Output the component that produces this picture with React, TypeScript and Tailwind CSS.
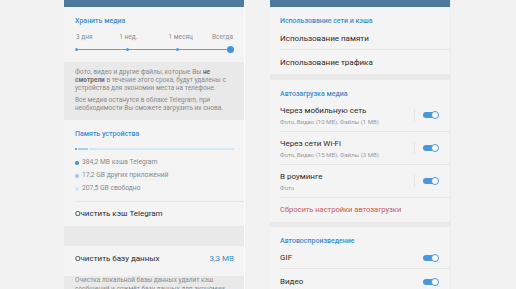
import React from "react";

const blue = "text-[#3b8dcb]";

const Title = ({ children }: { children: React.ReactNode }) => (
  <div className={`h-[18px] pt-[10px] text-[7px] leading-[8px] font-medium ${blue}`}>{children}</div>
);

const Toggle = () => (
  <div className="relative flex h-[8px] w-[16px] items-center">
    <div className="h-[6px] w-[14px] rounded-full bg-[#4a98dc]" />
    <div className="absolute right-0 top-0 h-[8px] w-[8px] rounded-full border-[1.5px] border-[#4a98dc] bg-white" />
  </div>
);

const AutoRow = ({ title, sub, h, pt }: { title: string; sub: string; h: string; pt: string }) => (
  <div className={`flex ${h} items-center border-b border-[#e6e6e6] pr-[11px]`}>
    <div className={`flex-1 self-start ${pt}`}>
      <div className="text-[8px] leading-[10px] text-[#2a2a2a]">{title}</div>
      <div className="mt-[2px] text-[6px] leading-[8px] text-[#9a9a9a]">{sub}</div>
    </div>
    <div className="mr-[8px] h-[12px] w-px bg-[#e2e2e2]" />
    <Toggle />
  </div>
);

const ticks = ["3 дня", "1 нед.", "1 месяц", "Всегда"];

const StoragePanel = () => (
  <div className="w-[181px] shrink-0 border-r border-[#fbfbfb] bg-[#f4f4f4]">
    <div className="h-[7px] bg-[#4f7aa0]" />
    <div className="pl-[11px] pr-[10px]">
      <Title>Хранить медиа</Title>
      <div className="h-[17px] pt-[9px]">
        <div className="mx-[1px] flex justify-between">
          {ticks.map((t, i) => (
            <div
              key={t}
              className={`flex w-0 ${i === 0 ? "justify-start" : i === 3 ? "justify-end" : "justify-center"}`}
            >
              <span className="whitespace-nowrap text-[6.5px] leading-[7px] text-[#8e8e8e]">{t}</span>
            </div>
          ))}
        </div>
      </div>
      <div className="h-[20px] pt-[3px]">
        <div className="relative flex h-[8px] items-center justify-between">
          <div className="absolute left-[1px] right-[3px] top-[3.5px] h-px bg-[#5aa6dc]" />
          <div className="relative h-[3px] w-[3px] rounded-full bg-[#4a9ade]" />
          <div className="relative h-[3px] w-[3px] rounded-full bg-[#4a9ade]" />
          <div className="relative h-[3px] w-[3px] rounded-full bg-[#4a9ade]" />
          <div className="relative h-[7px] w-[7px] rounded-full bg-[#3d95e0]" />
        </div>
      </div>
    </div>
    <div className="h-[58px] bg-[#e9e9e9] pl-[11px] pr-[4px] pt-[6px] text-[6.5px] leading-[8px] text-[#8a8a8a]">
      <p className="whitespace-nowrap">
        Фото, видео и другие файлы, которые Вы <b className="font-bold text-[#6f6f6f]">не</b>
        <br />
        <b className="font-bold text-[#6f6f6f]">смотрели</b> в течение этого срока, будут удалены с
        <br />
        устройства для экономии места на телефоне.
      </p>
      <p className="mt-[4px] whitespace-nowrap">
        Все медиа останутся в облаке Telegram, при
        <br />
        необходимости Вы сможете загрузить их снова.
      </p>
    </div>
    <div className="pl-[11px] pr-[10px]">
      <Title>Память устройства</Title>
      <div className="h-[18px] pt-[10px]">
        <div className="flex h-[2px] items-center gap-[1px]">
          <div className="h-[2px] w-[2px] rounded-full bg-[#3d8fd6]" />
          <div className="h-[2px] w-[10px] bg-[#a8cfee]" />
          <div className="h-[2px] flex-1 bg-[#d4e7f6]" />
        </div>
      </div>
      {[
        ["384,2 MB кэша Telegram", "bg-[#3d8fd6]"],
        ["17,2 GB других приложений", "bg-[#9ccaf0]"],
        ["207,5 GB свободно", "bg-[#d0e6f7]"],
      ].map(([t, c]) => (
        <div key={t} className="flex h-[13px] items-center gap-[3px]">
          <div className={`h-[4px] w-[4px] rounded-full ${c}`} />
          <span className="text-[6.7px] text-[#8a8a8a]">{t}</span>
        </div>
      ))}
    </div>
    <div className="ml-[11px] mt-[6px] flex h-[25px] items-center border-t border-[#e6e6e6] text-[8px] text-[#2a2a2a]">
      Очистить кэш Telegram
    </div>
    <div className="h-[20px] bg-[#e9e9e9]" />
    <div className="flex h-[30px] items-center justify-between pb-[4px] pl-[11px] pr-[10px] text-[8px]">
      <span className="text-[#2a2a2a]">Очистить базу данных</span>
      <span className={blue}>3,3 MB</span>
    </div>
    <div className="h-[20px] bg-[#e9e9e9] pl-[11px] text-[6.5px] leading-[9px] text-[#8a8a8a]">
      <p className="whitespace-nowrap">
        Очистка локальной базы данных удалит кэш
        <br />
        сообщений и сожмёт базу данных для экономии
      </p>
    </div>
  </div>
);

const NetworkPanel = () => (
  <div className="w-[181px] shrink-0 border-r border-[#ececec] bg-[#f4f4f4]">
    <div className="h-[7px] bg-[#4f7aa0]" />
    <div className="pl-[10px]">
      <Title>Использование сети и кэша</Title>
      <div className="flex h-[25px] items-center border-b border-[#e6e6e6] pt-[3px] text-[8px] text-[#2a2a2a]">
        Использование памяти
      </div>
      <div className="flex h-[24px] items-center pt-[2px] text-[8px] text-[#2a2a2a]">Использование трафика</div>
    </div>
    <div className="h-[6px] bg-[#e9e9e9]" />
    <div className="pl-[10px]">
      <Title>Автозагрузка медиа</Title>
      <AutoRow title="Через мобильную сеть" sub="Фото, Видео (10 MB), Файлы (1 MB)" h="h-[34px]" pt="pt-[8px]" />
      <AutoRow title="Через сети Wi-Fi" sub="Фото, Видео (15 MB), Файлы (3 MB)" h="h-[33px]" pt="pt-[7px]" />
      <AutoRow title="В роуминге" sub="Фото" h="h-[33px]" pt="pt-[7px]" />
      <div className="flex h-[24px] items-center text-[7.5px] text-[#c65b5b]">Сбросить настройки автозагрузки</div>
    </div>
    <div className="h-[5px] bg-[#e9e9e9]" />
    <div className="pl-[10px]">
      <Title>Автовоспроизведение</Title>
      <div className="flex h-[24px] items-center justify-between border-b border-[#e6e6e6] pr-[11px] pt-[3px] text-[8px] text-[#2a2a2a]">
        <span>GIF</span>
        <Toggle />
      </div>
      <div className="flex h-[24px] items-center justify-between pr-[11px] pt-[2px] text-[8px] text-[#2a2a2a]">
        <span>Видео</span>
        <Toggle />
      </div>
    </div>
  </div>
);

export default function App() {
  return (
    <div className="flex h-[289px] w-[516px] gap-[25px] overflow-hidden bg-[#f2f2f2] pl-[64px] font-['Roboto',sans-serif]">
      <StoragePanel />
      <NetworkPanel />
    </div>
  );
}
